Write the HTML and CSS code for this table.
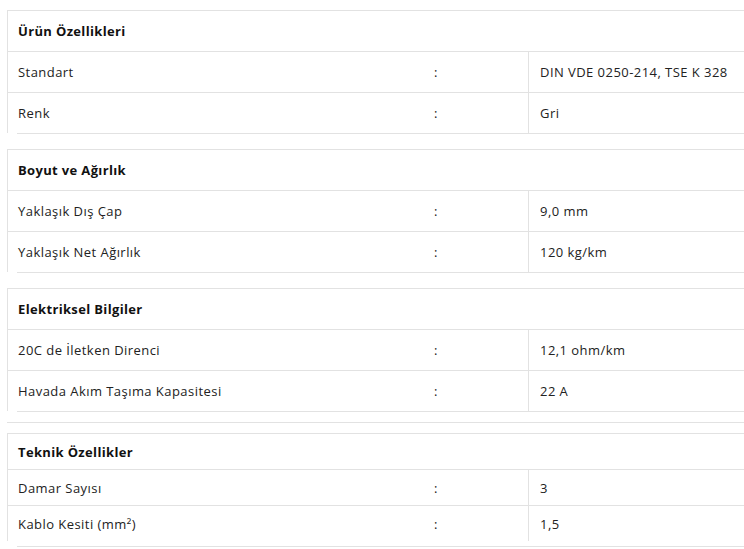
FILE: index.html
```html
<!DOCTYPE html>
<html lang="tr">
<head>
<meta charset="utf-8">
<title>Ürün Özellikleri</title>
<link rel="stylesheet" href="styles.css">
</head>
<body>
<div class="page">
  <section class="spec">
    <div class="spec-box">
      <div class="spec-head">Ürün Özellikleri</div>
      <div class="spec-row"><span class="label">Standart</span><span class="colon">:</span><span class="value">DIN VDE 0250-214, TSE K 328</span></div>
      <div class="spec-row"><span class="label">Renk</span><span class="colon">:</span><span class="value">Gri</span></div>
    </div>
    <div class="spec-end"></div>
  </section>
  <section class="spec">
    <div class="spec-box">
      <div class="spec-head">Boyut ve Ağırlık</div>
      <div class="spec-row"><span class="label">Yaklaşık Dış Çap</span><span class="colon">:</span><span class="value">9,0 mm</span></div>
      <div class="spec-row"><span class="label">Yaklaşık Net Ağırlık</span><span class="colon">:</span><span class="value">120 kg/km</span></div>
    </div>
    <div class="spec-end"></div>
  </section>
  <section class="spec">
    <div class="spec-box">
      <div class="spec-head">Elektriksel Bilgiler</div>
      <div class="spec-row"><span class="label">20C de İletken Direnci</span><span class="colon">:</span><span class="value">12,1 ohm/km</span></div>
      <div class="spec-row"><span class="label">Havada Akım Taşıma Kapasitesi</span><span class="colon">:</span><span class="value">22 A</span></div>
    </div>
    <div class="spec-end"></div>
  </section>
  <div class="separator"></div>
  <section class="spec spec-compact">
    <div class="spec-box">
      <div class="spec-head">Teknik Özellikler</div>
      <div class="spec-row"><span class="label">Damar Sayısı</span><span class="colon">:</span><span class="value">3</span></div>
      <div class="spec-row"><span class="label">Kablo Kesiti (mm²)</span><span class="colon">:</span><span class="value">1,5</span></div>
    </div>
    <div class="spec-end"></div>
  </section>
</div>
</body>
</html>
```

FILE: styles.css
```css
* { box-sizing: border-box; }
html, body { margin: 0; padding: 0; background: #fff; }
body {
  font-family: "Open Sans", "Noto Sans", sans-serif;
  font-size: 13px;
  letter-spacing: 0.45px;
  color: #222;
  overflow: hidden;
}
.page {
  padding: 10px 0 0 7px;
  display: flex;
  flex-direction: column;
}
.spec + .spec { margin-top: 15px; }
.spec-box {
  border-left: 1px solid #e2e2e2;
  border-top: 1px solid #e2e2e2;
}
.spec-head {
  height: 40px;
  display: flex;
  align-items: center;
  padding: 0 10px;
  font-weight: 700;
  color: #111;
  letter-spacing: 0.35px;
}
.spec-row {
  display: grid;
  grid-template-columns: 420px 100px 1fr;
  height: 41px;
  border-top: 1px solid #e2e2e2;
}
.spec-row > span {
  display: flex;
  align-items: center;
}
.label { padding-left: 10px; }
.colon { padding-left: 6px; }
.value {
  padding-left: 11px;
  border-left: 1px solid #e2e2e2;
}
.spec-end {
  margin-left: 10px;
  border-top: 1px solid #e2e2e2;
}
.separator {
  margin: 10px 0;
  border-top: 1px solid #e2e2e2;
}
.spec-compact .spec-head { height: 35px; }
.spec-compact .spec-row { height: 36px; }
.spec-compact .spec-end { margin-top: 5px; }
```
